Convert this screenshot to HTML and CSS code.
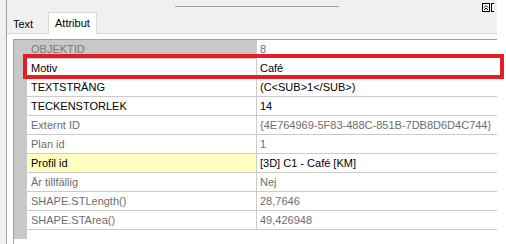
FILE: index.html
```html
<!DOCTYPE html>
<html lang="sv">
<head>
    <meta charset="UTF-8">
    <title>Attribut</title>
    <link rel="stylesheet" href="styles.css">
</head>
<body>
    <div class="window">
        <div class="edge"></div>
        <div class="pane">
            <div class="topbar">
                <div class="grip"></div>
                <div class="tools">
                    <svg width="12" height="10" viewBox="0 0 12 10">
                        <rect x="0.5" y="0.5" width="7" height="8" fill="#fff" stroke="#000"/>
                        <path d="M2 4.5 L4 2.5 L6 4.5 M2 7 L4 5 L6 7" fill="none" stroke="#000"/>
                        <rect x="9.5" y="0.5" width="7" height="8" fill="#fff" stroke="#000"/>
                    </svg>
                </div>
            </div>

            <div class="tabs">
                <div class="tab">Text</div>
                <div class="tab active">Attribut</div>
            </div>

            <div class="panel">
                <div class="grid">
                    <div class="rowheads"></div>
                    <div class="rows">
                        <div class="row locked">
                            <div class="name">OBJEKTID</div>
                            <div class="value muted">8</div>
                        </div>
                        <div class="row">
                            <div class="name">Motiv</div>
                            <div class="value">Café</div>
                        </div>
                        <div class="row">
                            <div class="name">TEXTSTRÄNG</div>
                            <div class="value">(C&lt;SUB&gt;1&lt;/SUB&gt;)</div>
                        </div>
                        <div class="row">
                            <div class="name">TECKENSTORLEK</div>
                            <div class="value">14</div>
                        </div>
                        <div class="row readonly">
                            <div class="name">Externt ID</div>
                            <div class="value">{4E764969-5F83-488C-851B-7DB8D6D4C744}</div>
                        </div>
                        <div class="row readonly">
                            <div class="name">Plan id</div>
                            <div class="value">1</div>
                        </div>
                        <div class="row required">
                            <div class="name">Profil id</div>
                            <div class="value">[3D] C1 - Café [KM]</div>
                        </div>
                        <div class="row readonly">
                            <div class="name">Är tillfällig</div>
                            <div class="value">Nej</div>
                        </div>
                        <div class="row readonly">
                            <div class="name">SHAPE.STLength()</div>
                            <div class="value">28,7646</div>
                        </div>
                        <div class="row readonly">
                            <div class="name">SHAPE.STArea()</div>
                            <div class="value">49,426948</div>
                        </div>
                    </div>
                    <!-- markering runt Motiv -->
                    <div class="highlight"></div>
                </div>
            </div>
        </div>
        <div class="outside"></div>
    </div>
</body>
</html>
```

FILE: styles.css
```css
:root {
    --pane-bg: #f0f0f0;
    --line: #a0a0a0;
    --cell-line: #cbcbcb;
    --head-gray: #c8c8c8;
    --muted: #6d6d6d;
    --required: #ffffc0;
    --mark: #e31e24;
}

body {
    margin: 0;
    font-family: "Liberation Sans", Arial, sans-serif;
    font-size: 11px;
    color: #000;
    background: #fff;
}

.window {
    display: flex;
    width: 506px;
    height: 244px;
    overflow: hidden;
}

.edge {
    width: 6px;
    background: var(--pane-bg);
}

.pane {
    width: 490px;
    border-left: 1px solid var(--line);
    background: var(--pane-bg);
    display: flex;
    flex-direction: column;
}

.outside {
    flex: 1;
    background: #fff;
}

.topbar {
    height: 13px;
    display: flex;
}

.topbar .grip {
    width: 164px;
    height: 1px;
    margin: 6px 0 0 168px;
    background: var(--line);
}

.topbar .tools {
    margin-left: auto;
    margin-top: 3px;
    width: 15px;
    height: 10px;
}

.topbar .tools svg {
    display: block;
}

.tabs {
    height: 20px;
    display: flex;
    align-items: flex-end;
    border-bottom: 1px solid #d9d9d9;
}

.tab {
    height: 18px;
    line-height: 18px;
    padding-left: 6px;
    width: 35px;
}

.tab.active {
    height: 20px;
    line-height: 21px;
    width: 41px;
    background: #fff;
    border: 1px solid #d9d9d9;
    border-bottom: none;
    margin-bottom: -1px;
    padding-bottom: 1px;
}

.panel {
    flex: 1;
    background: #fff;
    padding: 5px 0 0 6px;
}

.grid {
    position: relative;
    height: 100%;
    display: flex;
    border-top: 1px solid var(--line);
    border-left: 1px solid var(--line);
}

.rowheads {
    width: 13px;
    height: 199px;
    background: var(--head-gray);
}

.rows {
    flex: 1;
    display: flex;
    flex-direction: column;
}

.row {
    display: flex;
    height: 18px;
    line-height: 18px;
    border-bottom: 1px solid var(--cell-line);
}

.row .name {
    width: 225px;
    padding-left: 4px;
    border-right: 1px solid var(--cell-line);
    white-space: nowrap;
}

.row .value {
    flex: 1;
    padding-left: 3px;
    white-space: nowrap;
}

.row.locked .name {
    background: var(--head-gray);
    color: #7c7c7c;
}

.row.locked {
    border-bottom: none;
    height: 19px;
}

.value.muted {
    color: #6a6a86;
}

.row.readonly {
    color: var(--muted);
}

.row.required .name {
    background: var(--required);
}

.highlight {
    position: absolute;
    left: 9px;
    top: 14px;
    width: 481px;
    height: 25px;
    box-sizing: border-box;
    border: 4px solid var(--mark);
}
```
